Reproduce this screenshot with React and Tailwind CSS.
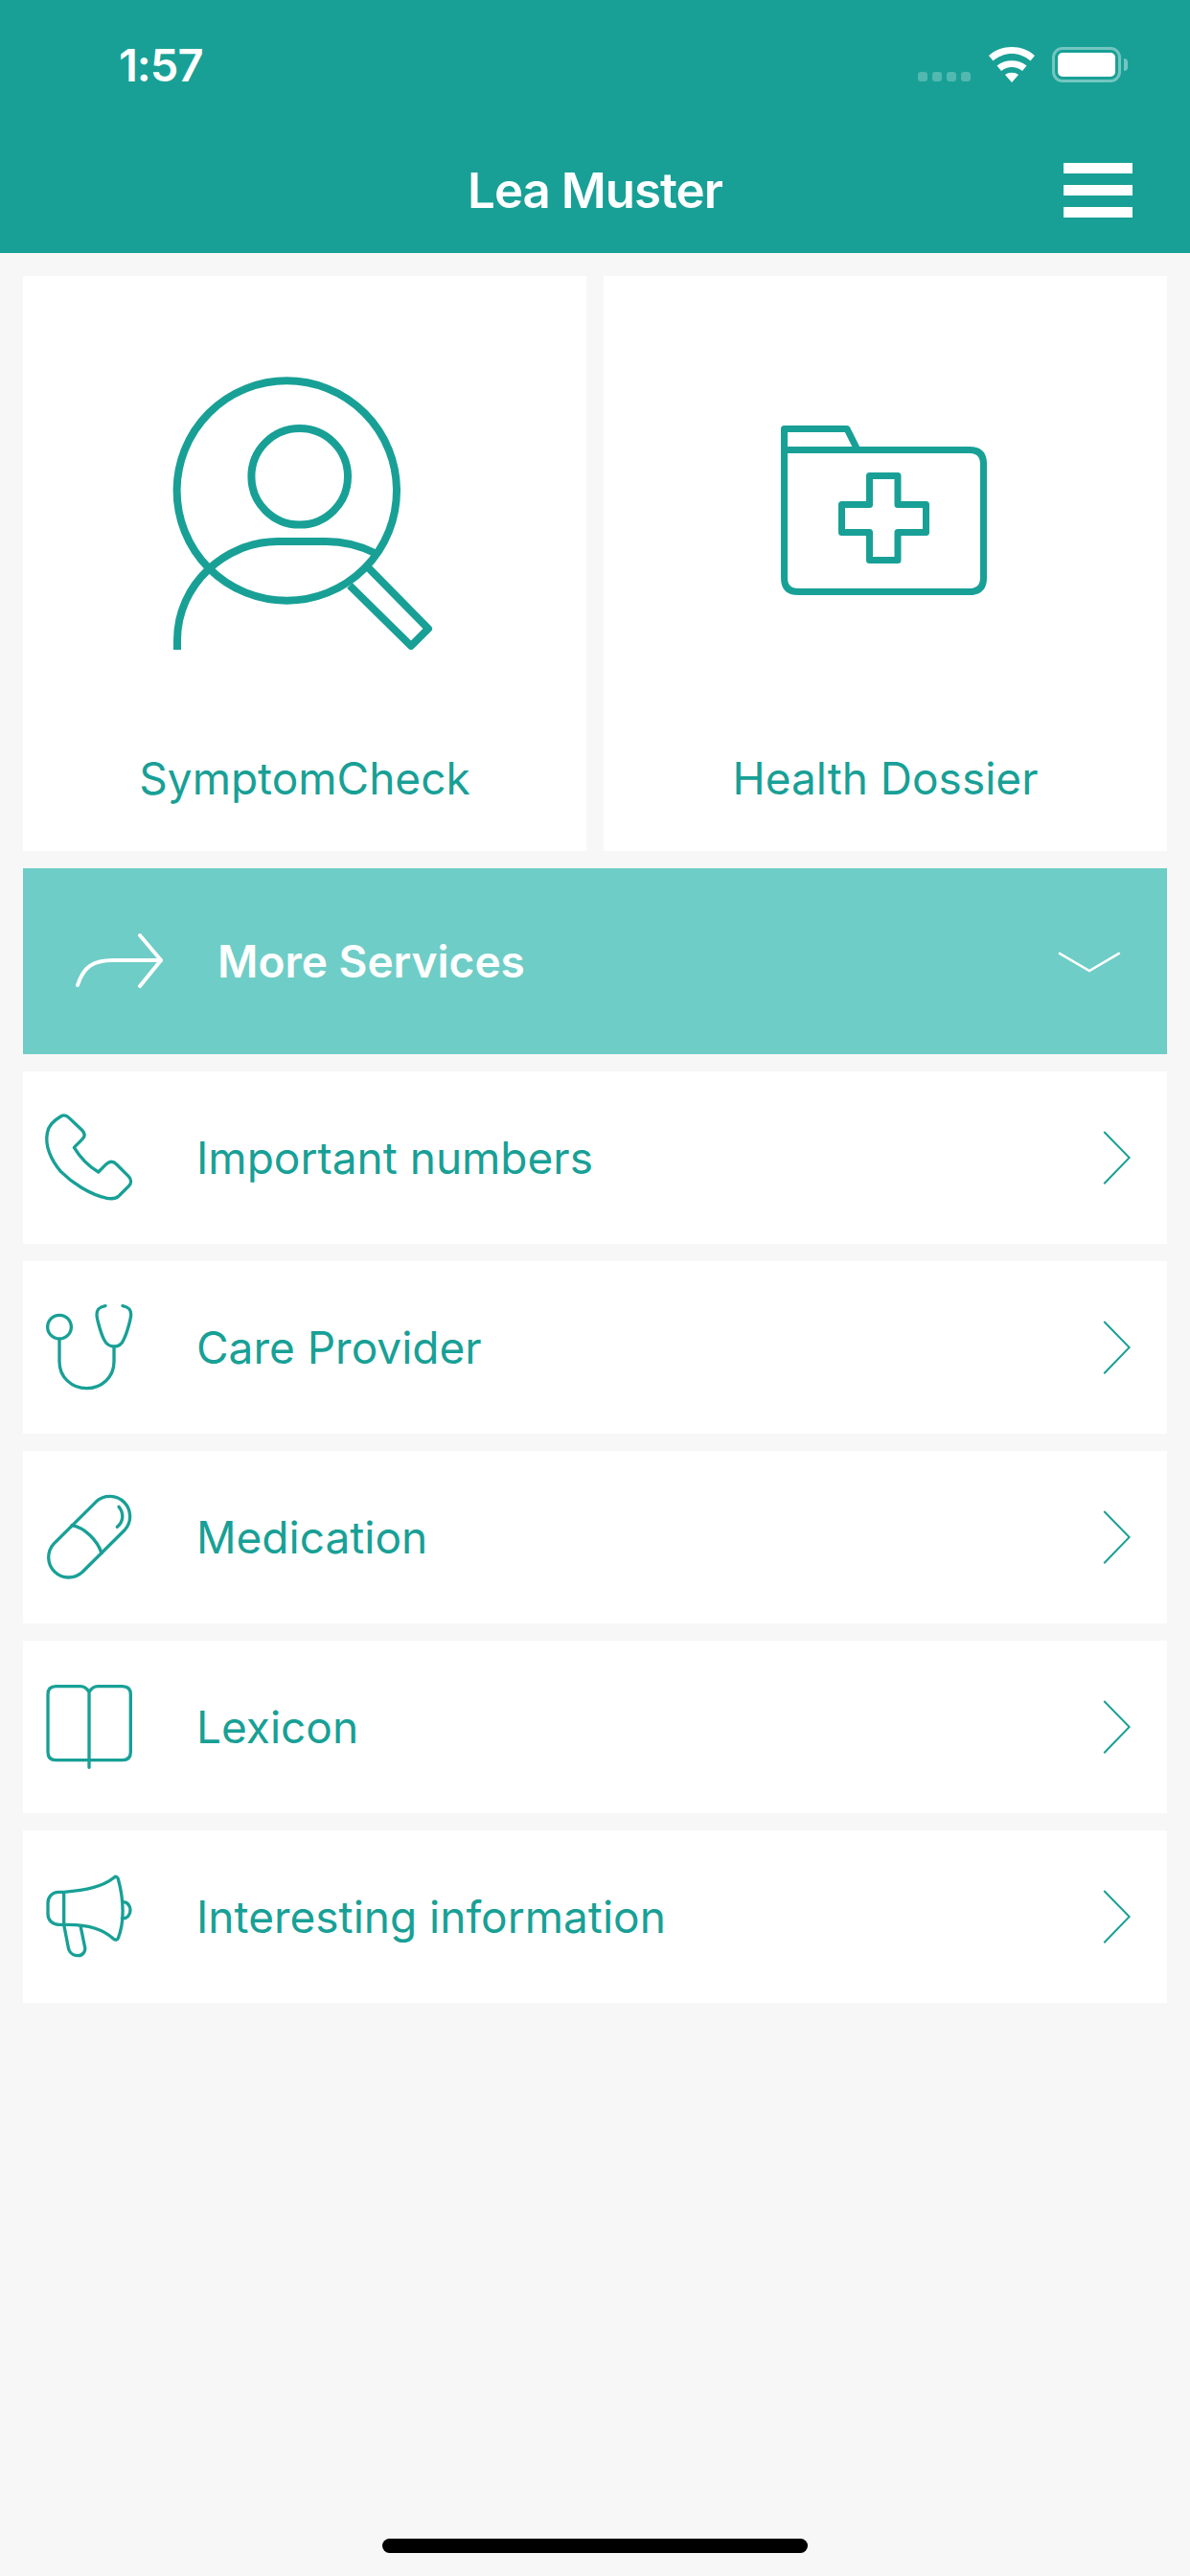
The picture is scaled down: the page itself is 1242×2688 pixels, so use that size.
import React from 'react';

const teal = '#18a096';

function StatusBar() {
  return (
    <div className="flex items-start h-[132px] pt-[49px] pl-[124px] pr-[65px]">
      <span className="text-[47px] leading-[38px] font-semibold text-white tracking-[-1px]">1:57</span>
      <div className="ml-auto flex items-start">
        <div className="flex gap-[5px] mt-[26px] mr-[19px]">
          <div className="w-[10px] h-[10px] rounded-[3px] bg-white/25" />
          <div className="w-[10px] h-[10px] rounded-[3px] bg-white/25" />
          <div className="w-[10px] h-[10px] rounded-[3px] bg-white/25" />
          <div className="w-[10px] h-[10px] rounded-[3px] bg-white/25" />
        </div>
        <svg width="48" height="37" viewBox="0 0 48 37" className="mr-[18px]">
          <path d="M0 9 C13 -3 35 -3 48 9 L43.5 14.5 C32 4.5 16 4.5 4.5 14.5 Z" fill="white" />
          <path d="M8.5 19.5 C17 12.5 31 12.5 39.5 19.5 L35 25 C28 19.5 20 19.5 13 25 Z" fill="white" />
          <path d="M17 29 C21 26 27 26 31 29 L24 37 Z" fill="white" />
        </svg>
        <div className="w-[72px] h-[37px] rounded-[11px] border-[3px] border-white/40 p-[3px]">
          <div className="w-full h-full rounded-[5px] bg-white" />
        </div>
        <div className="w-[4px] h-[13px] mt-[12px] ml-[3px] rounded-r-[4px] bg-white/40" />
      </div>
    </div>
  );
}

function NavBar() {
  return (
    <div className="grid grid-cols-[1fr_auto_1fr] items-center h-[132px]">
      <div />
      <span className="text-[51px] leading-none font-semibold text-white tracking-[-1px]">Lea Muster</span>
      <div className="justify-self-end flex flex-col gap-[12px] pr-[60px]">
        <div className="w-[72px] h-[11px] bg-white" />
        <div className="w-[72px] h-[11px] bg-white" />
        <div className="w-[72px] h-[11px] bg-white" />
      </div>
    </div>
  );
}

function Card({ label, children }) {
  return (
    <div className="bg-white h-[600px] flex flex-col items-center pt-[100px]">
      {children}
      <span className="mt-[101px] text-[46px] leading-[56px] text-[#18a096]">{label}</span>
    </div>
  );
}

function SymptomIcon() {
  return (
    <svg width="280" height="295" viewBox="178 388 280 295" fill="none" stroke={teal} strokeWidth="8">
      <circle cx="299.3" cy="512" r="114.7" />
      <circle cx="312.7" cy="497.3" r="50.3" />
      <path d="M185 678 V668 C185 610 235 565 290 565 H340 C358 565 375 569 391 577" />
      <path d="M385 593 L447 656 L429 674 L365 611" strokeLinejoin="round" />
    </svg>
  );
}

function DossierIcon() {
  return (
    <svg width="280" height="295" viewBox="784 388 280 295" fill="none" stroke={teal} strokeWidth="7" strokeLinejoin="round">
      <path d="M818.5 469.5 V447.5 H884 L895 469.5" />
      <path d="M818.5 469.5 H1012 Q1026.5 469.5 1026.5 484 V603 Q1026.5 617.5 1012 617.5 H833 Q818.5 617.5 818.5 603 Z" />
      <path d="M907.5 496.5 H937 V526.5 H966.5 V555.5 H937 V584.5 H907.5 V555.5 H878.5 V526.5 H907.5 Z" />
    </svg>
  );
}

function MoreServices() {
  return (
    <div className="flex items-center h-[194px] bg-[#6ecdc6] pl-[53px] pr-[47px]">
      <svg width="96" height="62" viewBox="77 971 96 62" fill="none" stroke="white" strokeWidth="4" strokeLinecap="round" strokeLinejoin="round" className="shrink-0">
        <path d="M81 1027 C87 1008 97 1001 118 1001 H168" />
        <path d="M146 975 L168 1001 L146 1028" />
      </svg>
      <span className="ml-[54px] text-[46px] leading-none font-semibold text-white">More Services</span>
      <svg width="68" height="23" viewBox="1103 991 68 23" fill="none" stroke="white" strokeWidth="2.5" className="ml-auto">
        <path d="M1105 993.3 L1137 1012 L1168.7 993.3" />
      </svg>
    </div>
  );
}

function Row({ label, children }) {
  return (
    <div className="flex items-center h-[180px] bg-white pl-[18px] pr-[38px]">
      {children}
      <span className="ml-[63px] text-[46px] leading-none text-[#18a096]">{label}</span>
      <svg width="30" height="58" viewBox="1150 1178 30 58" fill="none" stroke={teal} strokeWidth="2" className="ml-auto">
        <path d="M1152.3 1180 L1178.7 1207 L1152.3 1234.3" />
      </svg>
    </div>
  );
}

function RowIcon({ viewBox, children }) {
  return (
    <svg width="100" height="100" viewBox={viewBox} fill="none" stroke={teal} strokeWidth="10" strokeLinecap="round" strokeLinejoin="round" className="shrink-0">
      {children}
    </svg>
  );
}

export default function App() {
  return (
    <div className="relative min-h-[2688px] bg-[#f7f7f7] font-['Inter',sans-serif]">
      <div className="h-[264px] bg-[#18a096]">
        <StatusBar />
        <NavBar />
      </div>
      <div className="flex flex-col gap-[18px] px-[24px] pt-[24px]">
        <div className="grid grid-cols-2 gap-[18px]">
          <Card label="SymptomCheck"><SymptomIcon /></Card>
          <Card label="Health Dossier"><DossierIcon /></Card>
        </div>
        <MoreServices />
        <Row label="Important numbers">
          <RowIcon viewBox="126 807 300 300">
            <path d="M190 828 C198 823 208 824 216 832 L256 870 C266 880 267 890 258 899 L232 925 C250 955 275 982 308 1002 L333 977 C343 968 355 968 365 978 L403 1016 C411 1025 412 1037 404 1045 L372 1077 C363 1085 350 1087 335 1084 C280 1072 225 1035 190 1000 C160 965 140 920 148 880 C150 860 165 843 190 828 Z" />
          </RowIcon>
        </Row>
        <Row label="Care Provider">
          <RowIcon viewBox="126 201 300 300">
            <circle cx="186" cy="287" r="37" />
            <path d="M186 325 V395 C186 445 225 479 271 479 C317 479 357 445 357 395 V350" />
            <path d="M330 221 C310 225 303 232 303 248 C303 260 315 305 325 325 C332 340 345 348 357 348 C370 348 382 340 388 325 C398 305 410 260 410 248 C410 232 403 225 384 221" />
          </RowIcon>
        </Row>
        <Row label="Medication">
          <RowIcon viewBox="126 105 300 300">
            <path d="M301.5 143.5 A63 63 0 0 1 390.5 232.5 L257.5 364.5 A63 63 0 0 1 168.5 275.5 Z" />
            <path d="M225 218 C265 225 305 265 318 305" />
            <path d="M372 160 C388 180 388 205 367 223" />
          </RowIcon>
        </Row>
        <Row label="Lexicon">
          <RowIcon viewBox="126 99 300 300">
            <path d="M279 140 C272 128 265 122 252 122 H175 Q150 122 150 147 V328 Q150 353 175 353 H383 Q409 353 409 328 V147 Q409 122 383 122 H306 C293 122 286 128 279 140 V376" />
          </RowIcon>
        </Row>
        <Row label="Interesting information">
          <RowIcon viewBox="126 93 300 300">
            <path d="M200 166 H185 C160 166 150 185 150 200 V235 C150 255 165 268 185 268 H215 C270 268 320 280 355 312 C362 318 368 315 370 310 C390 260 388 190 370 125 C368 118 362 116 358 120 C320 150 270 160 200 166 V268 L215 345 C220 360 235 365 245 365 C260 365 270 350 265 335 L252 272" />
            <path d="M385 197 C400 197 408 210 408 222 C408 238 398 250 382 248" />
          </RowIcon>
        </Row>
      </div>
      <div className="absolute left-[399px] bottom-[24px] w-[444px] h-[15px] rounded-full bg-black" />
    </div>
  );
}
